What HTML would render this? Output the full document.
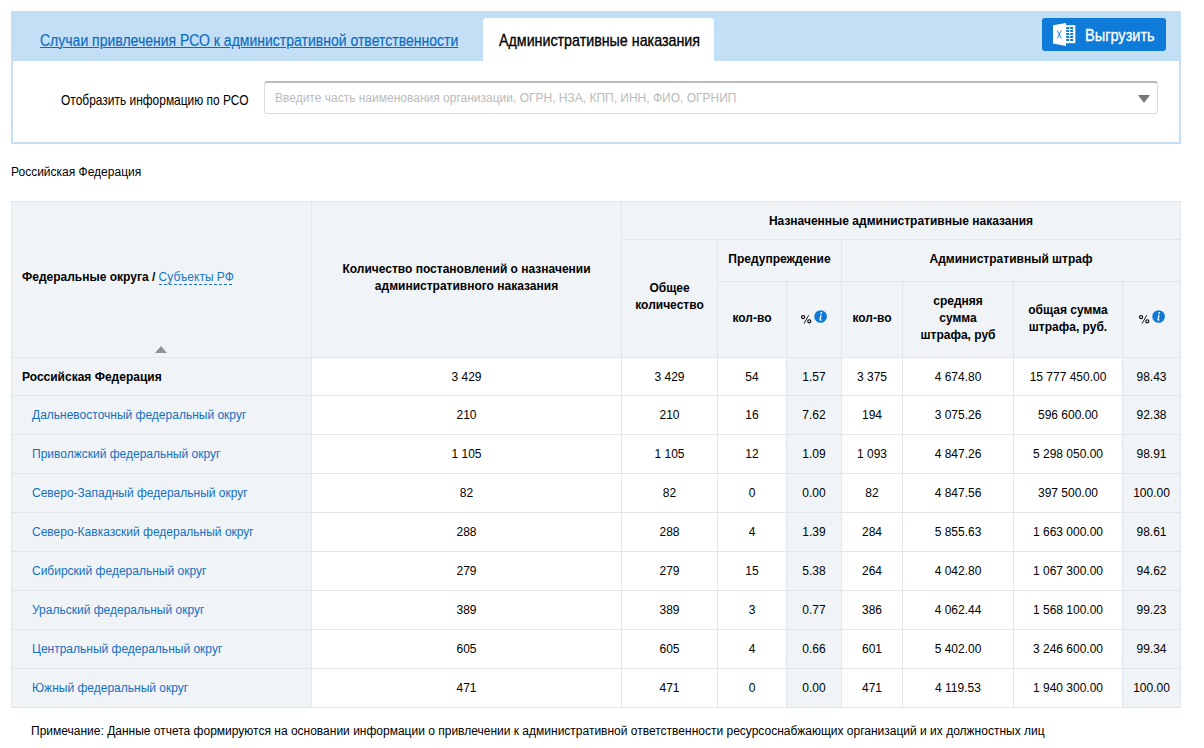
<!DOCTYPE html>
<html><head><meta charset="utf-8">
<style>
*{box-sizing:border-box;margin:0;padding:0}
html,body{width:1204px;height:748px;overflow:hidden;background:#fff;font-family:"Liberation Sans",sans-serif;color:#000}
.abs{position:absolute}
.cond{display:inline-block;transform-origin:0 0;white-space:nowrap}
#hdr{position:absolute;left:11px;top:11px;width:1170px;height:50px;background:#c2dff5}
#panel{position:absolute;left:11px;top:61px;width:1170px;height:83px;border:2px solid #c2dff5;border-top:none;background:#fff}
#tab1{position:absolute;left:40px;top:31px;font-size:17px;line-height:20px;color:#0c6abf;-webkit-text-stroke:0.15px #0c6abf}
#tab1 .cond{text-decoration:underline;text-underline-offset:1px}
#tab2{position:absolute;left:483px;top:18px;width:231px;height:43px;background:#fff;border-radius:4px 4px 0 0}
#tab2 span{position:absolute;left:16px;top:13px;font-size:17px;line-height:20px;color:#000;-webkit-text-stroke:0.35px #000}
#btn{position:absolute;left:1042px;top:18px;width:124px;height:33px;background:#0e7bd8;border-radius:3px}
#btn .t{position:absolute;left:43px;top:8px;font-size:17px;line-height:20px;color:#fff;-webkit-text-stroke:0.3px #fff}
#lbl{position:absolute;left:61px;top:91px;font-size:15px;line-height:18px;color:#000}
#inp{position:absolute;left:264px;top:81px;width:894px;height:33px;border:1px solid #ddd;border-top:2px solid #bbb;border-radius:3px;background:#fff}
#inp .ph{position:absolute;left:10px;top:8px;font-size:12px;color:#bbb}
#arr{position:absolute;left:1138px;top:95px;width:0;height:0;border-left:6px solid transparent;border-right:6px solid transparent;border-top:8px solid #777}
#rf{position:absolute;left:11px;top:165px;font-size:12px}
table{position:absolute;left:11px;top:201px;border-collapse:collapse;table-layout:fixed;font-size:12px}
td,th{border:1px solid #e1e7ec;text-align:center;vertical-align:middle}
th{background:#f0f4f7;font-weight:bold;line-height:17px}
td{height:39px}
tr.r1 td{height:38px}
.sub{font-weight:normal;color:#1b74c5;padding-bottom:1px;background:repeating-linear-gradient(90deg,#1a73c4 0 3px,transparent 3px 5px) 0 100%/100% 1px no-repeat}
.sort{position:absolute;left:143px;top:144px;width:0;height:0;border-left:6px solid transparent;border-right:6px solid transparent;border-bottom:7px solid #8e9399}
th.pb{padding-bottom:4px}
th.pc{padding-bottom:2px}
.info{display:inline-block;vertical-align:baseline;margin-left:2px}
.pc2{display:inline-block;vertical-align:baseline;position:relative;top:1px}
td.n{background:#f0f4f7;text-align:left;padding-left:20px;color:#136fc2}
td.n.b{font-weight:bold;color:#000;padding-left:10px}
td.g{background:#f0f4f7}
#note{position:absolute;left:31px;top:724px;font-size:12px}
</style></head><body>
<div id="hdr">
</div>
<div id="panel"></div>
<div id="tab1"><span class="cond" style="transform:scaleX(0.824)">Случаи привлечения РСО к административной ответственности</span></div>
<div id="tab2"><span class="cond" style="transform:scaleX(0.839)">Административные наказания</span></div>
<div id="btn"><svg style="position:absolute;left:11px;top:5px" width="24" height="24" viewBox="0 0 24 24"><polygon points="0,2.2 13,0 13,23 0,20.5" fill="#fff"/><rect x="13" y="2.2" width="9.3" height="18" fill="#fff"/><g fill="#0e7bd8"><rect x="13.2" y="4" width="3" height="2"/><rect x="17.2" y="4" width="3" height="2"/><rect x="13.2" y="7" width="3" height="2"/><rect x="17.2" y="7" width="3" height="2"/><rect x="13.2" y="10" width="3" height="2"/><rect x="17.2" y="10" width="3" height="2"/><rect x="13.2" y="13" width="3" height="2"/><rect x="17.2" y="13" width="3" height="2"/><rect x="13.2" y="16" width="3" height="2"/><rect x="17.2" y="16" width="3" height="2"/></g><path d="M4.3 7.5 L8.2 15.5 M8.2 7.5 L4.3 15.5" stroke="#0e7bd8" stroke-width="0.9" fill="none"/></svg><span class="t cond" style="transform:scaleX(0.855)">Выгрузить</span></div>
<div id="lbl"><span class="cond" style="transform:scaleX(0.797)">Отобразить информацию по РСО</span></div>
<div id="inp"><span class="ph">Введите часть наименования организации, ОГРН, НЗА, КПП, ИНН, ФИО, ОГРНИП</span></div>
<div id="arr"></div>
<div id="rf">Российская Федерация</div>
<table>
<colgroup><col style="width:300px"><col style="width:310px"><col style="width:96px"><col style="width:69px"><col style="width:55px"><col style="width:61px"><col style="width:111px"><col style="width:109px"><col style="width:58px"></colgroup>
<tr style="height:38px"><th rowspan="3" class="pb" style="text-align:left;padding-left:10px;position:relative">Федеральные округа / <span class="sub">Субъекты РФ</span><i class="sort"></i></th><th rowspan="3" class="pb">Количество постановлений о назначении<br>административного наказания</th><th colspan="7" style="padding-top:2px">Назначенные административные наказания</th></tr>
<tr style="height:42px"><th rowspan="2" class="pb">Общее<br>количество</th><th colspan="2" class="pc">Предупреждение</th><th colspan="4" class="pc">Административный штраф</th></tr>
<tr style="height:76px"><th class="pc">кол-во</th><th class="pc"><svg class="pc2" width="11" height="9" viewBox="0 0 11 9"><circle cx="2.1" cy="2.1" r="1.55" fill="none" stroke="#000" stroke-width="1.1"/><circle cx="8.3" cy="6.3" r="1.55" fill="none" stroke="#000" stroke-width="1.1"/><path d="M7.7 0.3 L3.0 8.6" stroke="#000" stroke-width="0.9"/></svg><svg class="info" width="13" height="13" viewBox="0 0 13 13"><circle cx="6.6" cy="6.5" r="6.3" fill="#1178d4"/><path d="M6.9 5.3 L6.1 9.3 Q5.9 10.4 7.1 10.0" stroke="#fff" stroke-width="1.3" fill="none" stroke-linecap="round"/><circle cx="7.3" cy="3.0" r="0.9" fill="#fff"/></svg></th><th class="pc">кол-во</th><th class="pc">средняя<br>сумма<br>штрафа, руб</th><th class="pc">общая сумма<br>штрафа, руб.</th><th class="pc"><svg class="pc2" width="11" height="9" viewBox="0 0 11 9"><circle cx="2.1" cy="2.1" r="1.55" fill="none" stroke="#000" stroke-width="1.1"/><circle cx="8.3" cy="6.3" r="1.55" fill="none" stroke="#000" stroke-width="1.1"/><path d="M7.7 0.3 L3.0 8.6" stroke="#000" stroke-width="0.9"/></svg><svg class="info" width="13" height="13" viewBox="0 0 13 13"><circle cx="6.6" cy="6.5" r="6.3" fill="#1178d4"/><path d="M6.9 5.3 L6.1 9.3 Q5.9 10.4 7.1 10.0" stroke="#fff" stroke-width="1.3" fill="none" stroke-linecap="round"/><circle cx="7.3" cy="3.0" r="0.9" fill="#fff"/></svg></th></tr>
<tr class="r1"><td class="n b">Российская Федерация</td><td>3 429</td><td>3 429</td><td>54</td><td class="g">1.57</td><td>3 375</td><td>4 674.80</td><td>15 777 450.00</td><td class="g">98.43</td></tr>
<tr><td class="n">Дальневосточный федеральный округ</td><td>210</td><td>210</td><td>16</td><td class="g">7.62</td><td>194</td><td>3 075.26</td><td>596 600.00</td><td class="g">92.38</td></tr>
<tr><td class="n">Приволжский федеральный округ</td><td>1 105</td><td>1 105</td><td>12</td><td class="g">1.09</td><td>1 093</td><td>4 847.26</td><td>5 298 050.00</td><td class="g">98.91</td></tr>
<tr><td class="n">Северо-Западный федеральный округ</td><td>82</td><td>82</td><td>0</td><td class="g">0.00</td><td>82</td><td>4 847.56</td><td>397 500.00</td><td class="g">100.00</td></tr>
<tr><td class="n">Северо-Кавказский федеральный округ</td><td>288</td><td>288</td><td>4</td><td class="g">1.39</td><td>284</td><td>5 855.63</td><td>1 663 000.00</td><td class="g">98.61</td></tr>
<tr><td class="n">Сибирский федеральный округ</td><td>279</td><td>279</td><td>15</td><td class="g">5.38</td><td>264</td><td>4 042.80</td><td>1 067 300.00</td><td class="g">94.62</td></tr>
<tr><td class="n">Уральский федеральный округ</td><td>389</td><td>389</td><td>3</td><td class="g">0.77</td><td>386</td><td>4 062.44</td><td>1 568 100.00</td><td class="g">99.23</td></tr>
<tr><td class="n">Центральный федеральный округ</td><td>605</td><td>605</td><td>4</td><td class="g">0.66</td><td>601</td><td>5 402.00</td><td>3 246 600.00</td><td class="g">99.34</td></tr>
<tr><td class="n">Южный федеральный округ</td><td>471</td><td>471</td><td>0</td><td class="g">0.00</td><td>471</td><td>4 119.53</td><td>1 940 300.00</td><td class="g">100.00</td></tr>
</table>
<div id="note">Примечание: Данные отчета формируются на основании информации о привлечении к административной ответственности ресурсоснабжающих организаций и их должностных лиц</div>
</body></html>
